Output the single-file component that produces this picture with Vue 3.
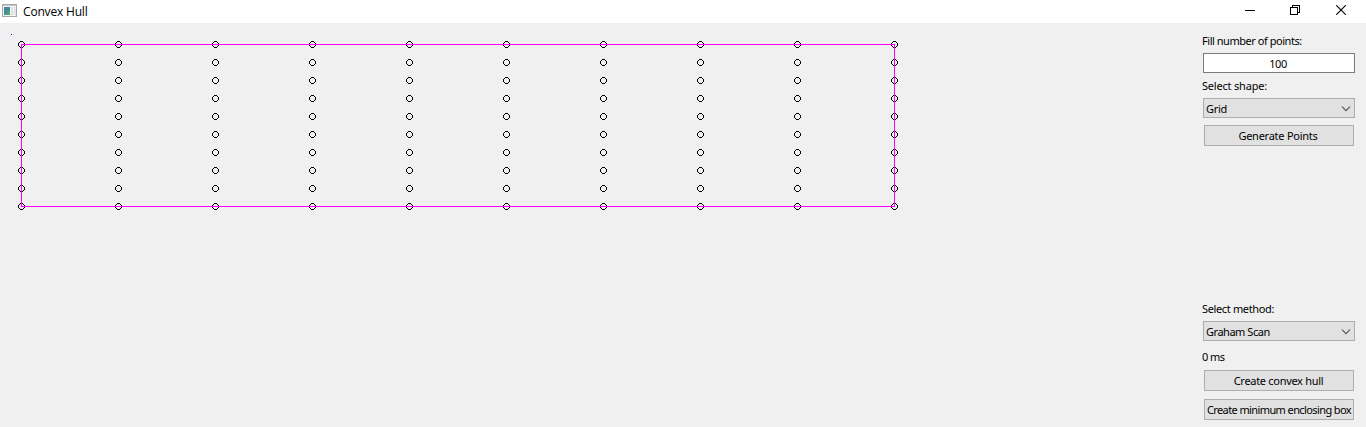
<script setup>
const columns = Array.from({ length: 10 }, (_, i) => 21 + i * 97)
const rows = Array.from({ length: 10 }, (_, i) => 21 + i * 18)
const points = columns.flatMap((x) => rows.map((y) => ({ x, y })))
const ring =
  'M-1-3h3v1h-3zM-1 3h3v1h-3zM-3-1h1v3h-1zM3-1h1v3h-1zM-2-2h1v1h-1zM2-2h1v1h-1zM-2 2h1v1h-1zM2 2h1v1h-1z'
</script>

<template>
  <div class="window">
    <header class="titlebar">
      <svg class="app-icon" width="16" height="16" viewBox="0 0 16 16">
        <defs>
          <linearGradient id="pane" x1="0" y1="0" x2="0.6" y2="1">
            <stop offset="0" stop-color="#4b79ad" />
            <stop offset="0.5" stop-color="#3d8c92" />
            <stop offset="1" stop-color="#55a878" />
          </linearGradient>
        </defs>
        <rect x="0.5" y="1.5" width="14" height="12" fill="#f4f4f4" stroke="#a5a8aa" />
        <rect x="1" y="2" width="13" height="1" fill="#c2c4c5" />
        <rect x="2" y="4" width="6" height="8" fill="url(#pane)" />
        <rect x="9" y="4" width="2" height="8" fill="#dcdfe0" />
        <rect x="12" y="4" width="2" height="8" fill="#dfe6e2" />
      </svg>
      <span class="title">Convex Hull</span>
      <div class="controls">
        <svg width="10" height="10" shape-rendering="crispEdges"><path d="M0 5h10v1H0z" /></svg>
        <svg class="restore" width="10" height="10" shape-rendering="crispEdges">
          <path d="M2 0h8v8H8V7h1V1H3v1H2zM0 2h8v8H0zM1 3v6h6V3z" fill-rule="evenodd" />
        </svg>
        <svg width="10" height="10"><path d="M.2.2l9.6 9.6M9.8.2L.2 9.8" fill="none" stroke="#000" stroke-width="1.1" /></svg>
      </div>
    </header>
    <main class="content">
      <svg class="canvas" width="1190" height="404" shape-rendering="crispEdges">
        <rect x="11" y="11" width="1" height="1" fill="#0000ff" />
        <path v-for="p in points" :key="`${p.x}-${p.y}`" :d="ring" :transform="`translate(${p.x} ${p.y})`" />
        <rect x="21.5" y="21.5" width="873" height="162" fill="none" stroke="#ff00ff" />
      </svg>
      <aside class="panel">
        <label class="label fill-label">Fill number of points:</label>
        <div class="input"><span>100</span></div>
        <label class="label shape-label">Select shape:</label>
        <div class="select">
          <span>Grid</span>
          <svg width="10" height="6"><path d="M1 .7l4 4 4-4" fill="none" stroke="#555" stroke-width="1.1" /></svg>
        </div>
        <div class="button generate"><span>Generate Points</span></div>
        <label class="label method-label">Select method:</label>
        <div class="select method">
          <span>Graham Scan</span>
          <svg width="10" height="6"><path d="M1 .7l4 4 4-4" fill="none" stroke="#555" stroke-width="1.1" /></svg>
        </div>
        <div class="label time">0 ms</div>
        <div class="button hull"><span>Create convex hull</span></div>
        <div class="button box"><span>Create minimum enclosing box</span></div>
      </aside>
    </main>
  </div>
</template>

<style>
body { background: #f0f0f0; overflow: hidden; }
</style>

<style scoped>
.window { width: 1366px; height: 427px; background: #f0f0f0; color: #000; font: 11px/14px "Noto Sans", "Open Sans", sans-serif; overflow: hidden; }
.titlebar { height: 23px; background: #fff; display: flex; align-items: center; padding: 0 20px 0 2px; box-sizing: border-box; }
.app-icon { margin-top: -1px; }
.title { font: 12px/16px "Open Sans", "Noto Sans", sans-serif; margin-left: 5px; letter-spacing: -0.18px; }
.controls { margin-left: auto; display: flex; gap: 35px; margin-top: -3px; }
.restore { margin-right: 1px; }
.content { display: flex; height: 404px; }
.canvas { display: block; flex: none; }
.panel { width: 152px; margin-left: 13px; }
.label { display: block; height: 14px; margin-left: -1px; white-space: nowrap; letter-spacing: -0.2px; }
.fill-label { padding-top: 11px; margin-bottom: 5px; letter-spacing: -0.46px; }
.input, .select, .button { box-sizing: border-box; display: flex; align-items: center; white-space: nowrap; }
.input { height: 20px; background: #fff; border: 1px solid #7a7a7a; justify-content: center; letter-spacing: -0.5px; padding: 2px 2px 0 0; }
.shape-label { margin-top: 6px; margin-bottom: 5px; }
.select { height: 20px; background: #e1e1e1; border: 1px solid #adadad; justify-content: space-between; padding: 1px 3px 0 2px; letter-spacing: -0.3px; }
.method { letter-spacing: -0.47px; }
.button { width: 150px; height: 21px; margin-left: 1px; background: #e1e1e1; border: 1px solid #adadad; justify-content: center; letter-spacing: -0.3px; }
.generate { margin-top: 7px; padding-right: 2px; letter-spacing: -0.25px; }
.method-label { margin-top: 156px; margin-bottom: 5px; letter-spacing: -0.36px; }
.time { margin-top: 9px; letter-spacing: -0.6px; }
.hull { margin-top: 6px; padding-right: 1px; }
.box { margin-top: 8px; letter-spacing: -0.6px; }
</style>
